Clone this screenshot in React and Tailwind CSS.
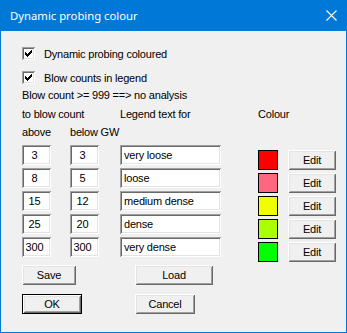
import React from "react";

const raised =
  "shadow-[inset_1px_1px_#ffffff,inset_-1px_-1px_#696969,inset_2px_2px_#e3e3e3,inset_-2px_-2px_#a0a0a0]";
const sunken =
  "shadow-[inset_1px_1px_#a0a0a0,inset_-1px_-1px_#ffffff,inset_2px_2px_#696969,inset_-2px_-2px_#e3e3e3]";

function Check() {
  const px = [
    [6, 0, 1],
    [5, 1, 2],
    [0, 2, 1],
    [4, 2, 3],
    [0, 3, 2],
    [3, 3, 3],
    [0, 4, 5],
    [1, 5, 3],
    [2, 6, 1],
  ];
  return (
    <div className={`w-[13px] h-[13px] bg-white ${sunken} relative shrink-0`}>
      <svg width="13" height="13" className="absolute left-0 top-0" shapeRendering="crispEdges">
        {px.map(([x, y, w], i) => (
          <rect key={i} x={3 + x} y={3 + y} width={w} height={1} fill="#000" />
        ))}
      </svg>
    </div>
  );
}

function Btn({ children, w, def }) {
  if (def) {
    return (
      <div className={`${w} h-[20px] border border-black flex`}>
        <div className={`flex-1 bg-[#f0f0f0] ${raised} flex items-center justify-center`}>
          {children}
        </div>
      </div>
    );
  }
  return (
    <div className={`${w} h-[20px] bg-[#f0f0f0] ${raised} flex items-center justify-center`}>
      {children}
    </div>
  );
}

const rows = [
  ["3", "3", "very loose", "#ff0000"],
  ["8", "5", "loose", "#ff6680"],
  ["15", "12", "medium dense", "#f0ff00"],
  ["25", "20", "dense", "#aaff00"],
  ["300", "300", "very dense", "#00ff00"],
];

export default function App() {
  return (
    <div className="w-[347px] h-[333px] bg-[#f0f0f0] border-x border-b border-[#0078d7] flex flex-col font-['Liberation_Sans',Arial,sans-serif] text-[11px] tracking-[-0.2px] text-black leading-[14px]">
      <div className="h-[31px] bg-[#0078d7] -mx-px flex items-center justify-between pl-[10px] pr-[10px] shrink-0">
        <span className="text-white text-[11.3px] tracking-normal font-['Noto_Sans',sans-serif] leading-[16px]">
          Dynamic probing colour
        </span>
        <svg width="11" height="11" viewBox="0 0 11 11">
          <path d="M0.5 0.5 L10.5 10.5 M10.5 0.5 L0.5 10.5" stroke="#fff" strokeWidth="1.1" />
        </svg>
      </div>
      <div className="pl-[21px] flex flex-col">
        <div className="mt-[16px] flex items-center h-[13px]">
          <Check />
          <span className="ml-[9px]">Dynamic probing coloured</span>
        </div>
        <div className="mt-[11px] flex items-center h-[13px]">
          <Check />
          <span className="ml-[9px]">Blow counts in legend</span>
        </div>
        <div className="mt-[4px] h-[14px]">Blow count &gt;= 999 ==&gt; no analysis</div>
        <div className="mt-[5px] h-[14px] flex">
          <div className="w-[98px]">to blow count</div>
          <div className="w-[138px]">Legend text for</div>
          <div>Colour</div>
        </div>
        <div className="mt-[4px] h-[14px] flex">
          <div className="w-[48px]">above</div>
          <div>below GW</div>
        </div>
        <div className="mt-[6px] flex items-start">
          <div className="w-[236px] flex flex-col gap-[3px]">
            {rows.map((r, i) => (
              <div key={i} className="flex h-[20px]">
                <div className={`w-[29px] h-[20px] bg-white ${sunken} flex items-center justify-center pl-[2px] pr-[6px]`}>
                  {r[0]}
                </div>
                <div className={`ml-[19px] w-[29px] h-[20px] bg-white ${sunken} flex items-center justify-center pl-[2px] pr-[6px]`}>
                  {r[1]}
                </div>
                <div className={`ml-[21px] w-[101px] h-[20px] bg-white ${sunken} flex items-center pl-[4px]`}>
                  {r[2]}
                </div>
              </div>
            ))}
          </div>
          <div className="pt-[5px] flex flex-col gap-[3px]">
            {rows.map((r, i) => (
              <div key={i} className="flex items-center h-[20px]">
                <div className="w-[20px] h-[20px] border border-black" style={{ backgroundColor: r[3] }} />
                <div className="ml-[10px]">
                  <Btn w="w-[48px]">Edit</Btn>
                </div>
              </div>
            ))}
          </div>
        </div>
        <div className="mt-[3px] flex">
          <Btn w="w-[54px]">Save</Btn>
          <div className="ml-[59px]">
            <Btn w="w-[78px]">Load</Btn>
          </div>
        </div>
        <div className="mt-[9px] flex">
          <Btn w="w-[60px]" def>
            OK
          </Btn>
          <div className="ml-[53px]">
            <Btn w="w-[60px]">Cancel</Btn>
          </div>
        </div>
      </div>
    </div>
  );
}
